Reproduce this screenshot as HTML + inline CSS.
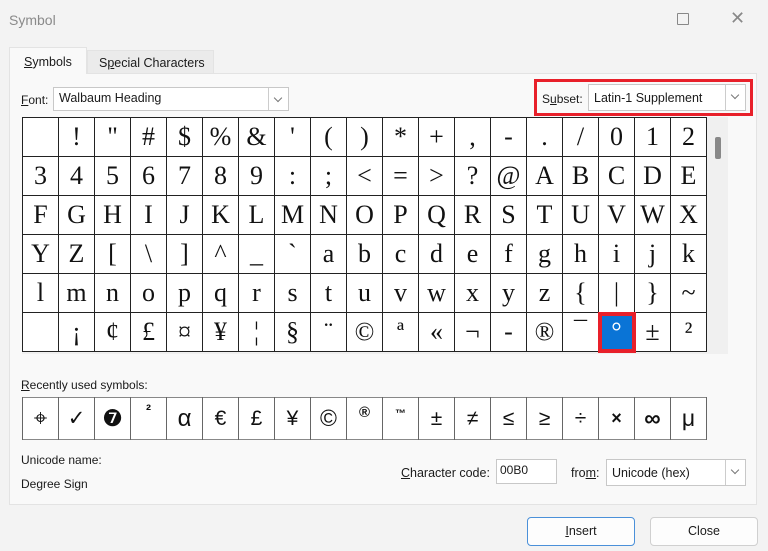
<!DOCTYPE html>
<html><head><meta charset="utf-8"><style>
*{box-sizing:border-box;margin:0;padding:0}
body{width:768px;height:551px;background:#f3f3f3;font-family:"Liberation Sans","DejaVu Sans",sans-serif;font-size:12px;color:#1a1a1a;position:relative;overflow:hidden}
.a{position:absolute}
.panel{left:9px;top:73px;width:748px;height:432px;background:#f9f9f9;border:1px solid #e3e3e3}
.combo{background:#fff;border:1px solid #c8c8c8;font-size:12.5px;padding:3px 5px}
.dd{position:absolute;right:0;top:0;bottom:0;width:20px;border-left:1px solid #ccc;background:#fff}
.dd:after{content:"";position:absolute;left:6px;top:7px;width:5px;height:5px;border-right:1px solid #777;border-bottom:1px solid #777;transform:rotate(45deg)}
table{border-collapse:collapse}
.grid td{width:36px;height:39px;border:1px solid #222;text-align:center;font-family:"Liberation Serif",serif;font-size:26px;padding:0;background:#fff;color:#111}
.rec td{width:36px;height:41px;border:1px solid #666;border-top:none;border-bottom:none;text-align:center;font-size:21px;padding:0;background:#fff;color:#111}
.btn{background:#fdfdfd;border:1px solid #d0d0d0;border-radius:4px;text-align:center;line-height:27px;font-size:12.5px}
u{text-decoration:underline}
</style></head><body>
<div class="a" style="left:9px;top:12px;font-size:14px;color:#8a8a8a">Symbol</div>
<div class="a" style="left:677px;top:13px;width:12px;height:12px;border:1px solid #888;border-radius:1px"></div>
<div class="a" style="left:730px;top:8px;font-size:18px;color:#888">✕</div>
<div class="a panel"></div>
<div class="a" style="left:9px;top:47px;width:78px;height:27px;background:#f9f9f9;border:1px solid #e3e3e3;border-bottom:none;padding:7px 0 0 14px;font-size:12.5px"><u>S</u>ymbols</div>
<div class="a" style="left:87px;top:50px;width:127px;height:23px;background:#ebebeb;border:1px solid #e3e3e3;border-bottom:none;padding:5px 0 0 11px;font-size:12.5px">S<u>p</u>ecial Characters</div>
<div class="a" style="left:21px;top:93px;font-size:12px"><u>F</u>ont:</div>
<div class="a combo" style="left:53px;top:87px;width:236px;height:24px">Walbaum Heading<div class="dd"></div></div>
<div class="a" style="left:534px;top:79px;width:219px;height:37px;border:3px solid #e8202a"></div>
<div class="a" style="left:542px;top:92px">S<u>u</u>bset:</div>
<div class="a combo" style="left:588px;top:84px;width:158px;height:27px;padding-top:6px">Latin-1 Supplement<div class="dd"></div></div>
<div class="a" style="left:22px;top:117px;width:706px;height:237px;background:#f0f0f0"></div>
<div class="a" style="left:715px;top:137px;width:6px;height:22px;background:#888;border-radius:2px"></div>
<table class="a grid" style="left:22px;top:117px">
<tr><td></td><td>!</td><td>"</td><td>#</td><td>$</td><td>%</td><td>&amp;</td><td>'</td><td>(</td><td>)</td><td>*</td><td>+</td><td>,</td><td>-</td><td>.</td><td>/</td><td>0</td><td>1</td><td>2</td></tr>
<tr><td>3</td><td>4</td><td>5</td><td>6</td><td>7</td><td>8</td><td>9</td><td>:</td><td>;</td><td>&lt;</td><td>=</td><td>&gt;</td><td>?</td><td>@</td><td>A</td><td>B</td><td>C</td><td>D</td><td>E</td></tr>
<tr><td>F</td><td>G</td><td>H</td><td>I</td><td>J</td><td>K</td><td>L</td><td>M</td><td>N</td><td>O</td><td>P</td><td>Q</td><td>R</td><td>S</td><td>T</td><td>U</td><td>V</td><td>W</td><td>X</td></tr>
<tr><td>Y</td><td>Z</td><td>[</td><td>\</td><td>]</td><td>^</td><td>_</td><td>`</td><td>a</td><td>b</td><td>c</td><td>d</td><td>e</td><td>f</td><td>g</td><td>h</td><td>i</td><td>j</td><td>k</td></tr>
<tr><td>l</td><td>m</td><td>n</td><td>o</td><td>p</td><td>q</td><td>r</td><td>s</td><td>t</td><td>u</td><td>v</td><td>w</td><td>x</td><td>y</td><td>z</td><td>{</td><td>|</td><td>}</td><td>~</td></tr>
<tr><td></td><td>¡</td><td>¢</td><td>£</td><td>¤</td><td>¥</td><td>¦</td><td>§</td><td>¨</td><td>©</td><td>ª</td><td>«</td><td>¬</td><td>-</td><td>®</td><td>¯</td><td style="background:#0a74d6;color:#fff;outline:4px solid #e8202a;outline-offset:-3px">°</td><td>±</td><td>²</td></tr>
</table>
<div class="a" style="left:21px;top:378px"><u>R</u>ecently used symbols:</div>
<table class="a rec" style="left:22px;top:397px;border:1px solid #888;height:43px">
<tr><td style="font-size:24px">⌖</td><td style="font-weight:bold">✓</td><td style="font-size:23px">❼</td><td style="font-size:15px;font-weight:bold;vertical-align:top;padding-top:4px">²</td><td style="font-size:24px">α</td><td>€</td><td>£</td><td>¥</td><td style="font-size:23px">©</td><td style="font-size:15px;font-weight:bold;vertical-align:top;padding-top:6px">®</td><td style="font-size:11px;font-weight:bold;vertical-align:top;padding-top:10px">™</td><td>±</td><td>≠</td><td>≤</td><td>≥</td><td>÷</td><td style="font-size:18px;font-weight:bold">×</td><td style="font-size:23px;font-weight:bold">∞</td><td style="font-size:23px">μ</td></tr>
</table>
<div class="a" style="left:21px;top:453px">Unicode name:</div>
<div class="a" style="left:21px;top:477px">Degree Sign</div>
<div class="a" style="left:401px;top:466px;font-size:12.5px"><u>C</u>haracter code:</div>
<div class="a" style="left:496px;top:459px;width:61px;height:25px;background:#fff;border:1px solid #c8c8c8;padding:3px 3px;font-size:12px">00B0</div>
<div class="a" style="left:571px;top:466px;font-size:12.5px">fro<u>m</u>:</div>
<div class="a combo" style="left:606px;top:459px;width:140px;height:27px;padding-top:6px">Unicode (hex)<div class="dd"></div></div>
<div class="a btn" style="left:527px;top:517px;width:108px;height:29px;border-color:#4a90d9"><u>I</u>nsert</div>
<div class="a btn" style="left:650px;top:517px;width:108px;height:29px">Close</div>
</body></html>
